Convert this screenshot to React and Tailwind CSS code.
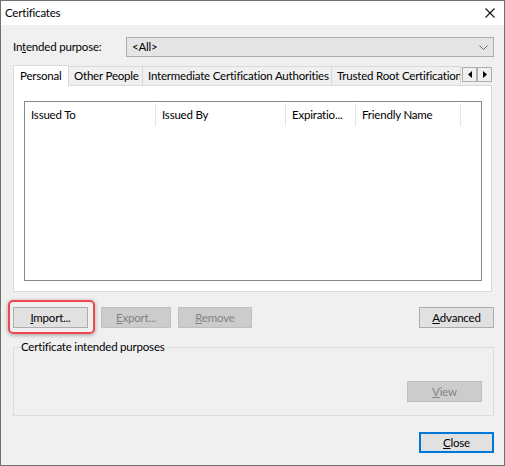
const font = { fontFamily: 'Lato, "Liberation Sans", sans-serif', letterSpacing: '-0.2px' };

function Btn({ children, disabled, focused, width = 75 }) {
  const tone = disabled
    ? 'border border-[#bfbfbf] bg-[#cccccc] text-[#838383]'
    : focused
    ? 'border-2 border-[#0078d7] bg-[#e1e1e1] text-black'
    : 'border border-[#adadad] bg-[#e1e1e1] text-black';
  return (
    <div
      className={`h-[21px] flex items-center justify-center text-[11.5px] leading-none ${tone}`}
      style={{ width }}
    >
      {children}
    </div>
  );
}

function Tab({ label, width, active }) {
  if (active) {
    return (
      <div
        className="h-[21px] -mb-px border border-b-0 border-[#d9d9d9] bg-white flex items-center pl-[6px] text-[11.5px] relative z-10"
        style={{ width }}
      >
        {label}
      </div>
    );
  }
  return (
    <div
      className="h-[19px] border border-l-0 border-b-0 border-[#d9d9d9] bg-[#f0f0f0] flex items-center pl-[5px] text-[11.5px] overflow-hidden whitespace-nowrap"
      style={{ width }}
    >
      {label}
    </div>
  );
}

function Arrow({ dir }) {
  return (
    <div className="w-[15px] h-[15px] border border-[#adadad] bg-[#f0f0f0] flex items-center justify-center">
      <svg width="4" height="7" viewBox="0 0 4 7">
        {dir === 'left' ? <path d="M4 0 L0 3.5 L4 7 Z" fill="#000" /> : <path d="M0 0 L4 3.5 L0 7 Z" fill="#000" />}
      </svg>
    </div>
  );
}

const columns = [
  { label: 'Issued To', width: 131 },
  { label: 'Issued By', width: 130 },
  { label: 'Expiratio...', width: 70 },
  { label: 'Friendly Name', width: 105 },
];

export default function App() {
  return (
    <div className="w-[505px] h-[466px] bg-[#f0f0f0] border border-[#707070] text-black" style={font}>
      {/* title bar */}
      <div className="h-[24px] bg-white flex items-center justify-between pl-[4px] pr-[9px]">
        <span className="text-[11.5px]">Certificates</span>
        <svg width="10" height="10" viewBox="0 0 10 10">
          <path d="M0.5 0.5 L9.5 9.5 M9.5 0.5 L0.5 9.5" stroke="#111" strokeWidth="1.1" />
        </svg>
      </div>

      <div className="pl-[12px]">
        {/* intended purpose */}
        <div className="flex items-center mt-[12px] h-[20px]">
          <span className="w-[113px] text-[11.5px]">
            In<u>t</u>ended purpose:
          </span>
          <div className="w-[368px] h-[20px] bg-[#e5e5e5] border border-[#adadad] flex items-center justify-between pl-[5px] pr-[5px] text-[11.5px]">
            <span>&lt;All&gt;</span>
            <svg width="9" height="5" viewBox="0 0 9 5">
              <path d="M0.5 0.5 L4.5 4.5 L8.5 0.5" fill="none" stroke="#6b6b6b" strokeWidth="1" />
            </svg>
          </div>
        </div>

        {/* tabs */}
        <div className="mt-[8px] w-[479px]">
          <div className="flex items-end">
            <Tab label="Personal" width={56} active />
            <Tab label="Other People" width={74} />
            <Tab label="Intermediate Certification Authorities" width={189} />
            <Tab label="Trusted Root Certification Authorities" width={129} />
            <div className="flex self-start mt-[2px] ml-[1px]">
              <Arrow dir="left" />
              <Arrow dir="right" />
            </div>
          </div>
          <div className="h-[207px] bg-white border border-[#d9d9d9] pt-[15px] pl-[10px]">
            <div className="w-[458px] h-[180px] border border-[#828790]">
              <div className="flex h-[25px]">
                {columns.map((c) => (
                  <div
                    key={c.label}
                    className="flex items-center pl-[6px] text-[11.5px] border-r border-[#e5e5e5] my-[1px]"
                    style={{ width: c.width }}
                  >
                    {c.label}
                  </div>
                ))}
              </div>
            </div>
          </div>
        </div>

        {/* action buttons */}
        <div className="flex items-center mt-[15px] w-[481px]">
          <div className="relative">
            <div className="absolute -left-[5px] -top-[7px] w-[87px] h-[34px] rounded-[5px] border-[2.5px] border-[#f0464d] shadow-[0_1px_4px_rgba(0,0,0,0.35)]" />
            <Btn>
              <span>
                <u>I</u>mport...
              </span>
            </Btn>
          </div>
          <div className="ml-[13px]">
            <Btn disabled width={70}>
              <span>
                <u>E</u>xport...
              </span>
            </Btn>
          </div>
          <div className="ml-[7px]">
            <Btn disabled width={74}>
              <span>
                <u>R</u>emove
              </span>
            </Btn>
          </div>
          <div className="ml-auto">
            <Btn>
              <span>
                <u>A</u>dvanced
              </span>
            </Btn>
          </div>
        </div>

        {/* intended purposes group */}
        <div className="relative mt-[19px] w-[481px] h-[69px] border border-[#dcdcdc]">
          <span className="absolute left-[6px] -top-[9px] bg-[#f0f0f0] px-[1px] text-[11.5px] leading-[16px]">
            Certificate intended purposes
          </span>
          <div className="flex justify-end pr-[11px] pt-[33px]">
            <Btn disabled>
              <span>
                <u>V</u>iew
              </span>
            </Btn>
          </div>
        </div>

        {/* footer */}
        <div className="flex justify-end w-[481px] mt-[16px]">
          <Btn focused>
            <span>
              <u>C</u>lose
            </span>
          </Btn>
        </div>
      </div>
    </div>
  );
}
